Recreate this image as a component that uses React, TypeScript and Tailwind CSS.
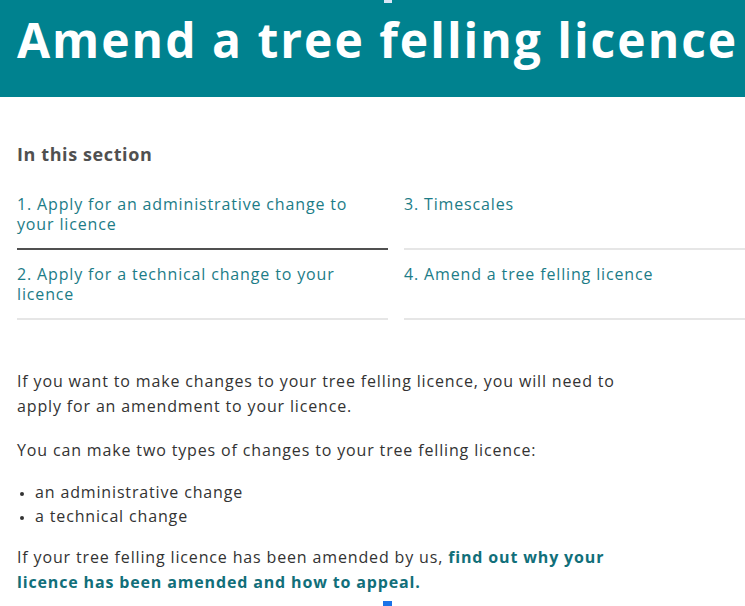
const sections = [
  { num: 1, title: "Apply for an administrative change to your licence", active: true },
  { num: 3, title: "Timescales" },
  { num: 2, title: "Apply for a technical change to your licence" },
  { num: 4, title: "Amend a tree felling licence" },
];

export default function App() {
  return (
    <div className="relative min-h-[606px] w-[745px] overflow-hidden bg-white font-['Open_Sans',sans-serif] text-[#333]">
      {/* Page header */}
      <header className="h-[97px] bg-[#00828f] pl-[17px] pt-[12px]">
        <h1 className="whitespace-nowrap text-[48px] font-bold leading-[56px] tracking-[2px] text-white">
          Amend a tree felling licence
        </h1>
      </header>

      <main className="pl-[17px] pt-[45px]">
        {/* In this section */}
        <h2 className="text-[18px] font-bold leading-[24px] tracking-[0.6px] text-[#505050]">In this section</h2>
        <nav className="mt-[14px] grid grid-cols-[371px_341px] gap-x-[16px] tracking-[0.85px]">
          {sections.map((s) => (
            <a
              key={s.num}
              href="#"
              className={`h-[70px] pr-4 pt-[14px] text-[16px] leading-[20px] text-[#1c7c87] ${
                s.active ? "border-b-2 border-[#505050]" : "border-b-2 border-[#e6e6e6]"
              }`}
            >
              {s.num}. {s.title}
            </a>
          ))}
        </nav>

        {/* Body copy */}
        <div className="mt-[49px] w-[640px] text-[16px] leading-[24.5px] tracking-[0.85px]">
          <p>
            If you want to make changes to your tree felling licence, you will need to apply for an amendment to
            your licence.
          </p>
          <p className="mt-[19.5px]">You can make two types of changes to your tree felling licence:</p>
          <ul className="mt-[17.5px] list-disc pl-[18px] marker:text-[12px]">
            <li>an administrative change</li>
            <li>a technical change</li>
          </ul>
          <p className="mt-[16.5px]">
            If your tree felling licence has been amended by us,{" "}
            <a href="#" className="font-bold text-[#116f7a]">
              find out why your licence has been amended and how to appeal.
            </a>
          </p>
        </div>
      </main>

      {/* selection handles */}
      <span className="absolute left-[384px] top-0 h-[3px] w-[8px] bg-[#dbe6f7]" />
      <span className="absolute left-[383px] top-[601px] h-[6px] w-[9px] bg-[#1a73e8]" />
    </div>
  );
}
